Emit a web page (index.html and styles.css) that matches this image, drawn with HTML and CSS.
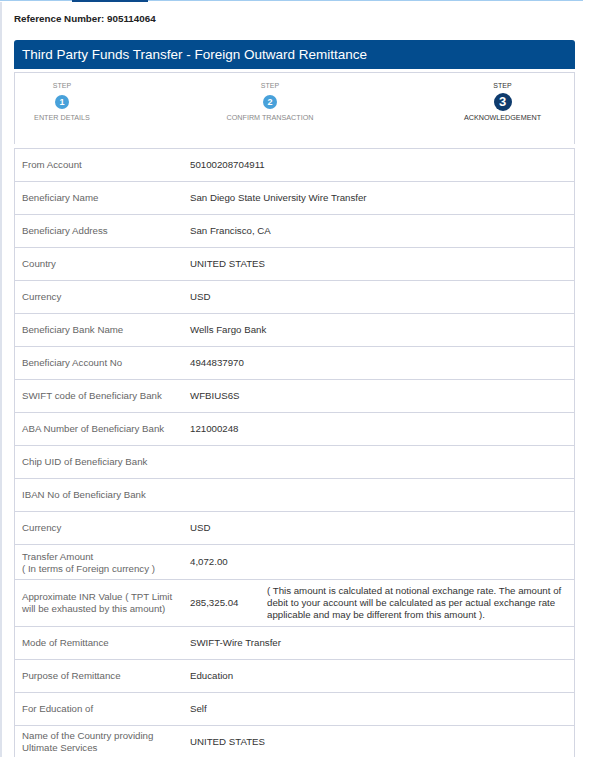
FILE: index.html
```html
<!DOCTYPE html>
<html>
<head>
<meta charset="utf-8">
<link rel="stylesheet" href="styles.css">
</head>
<body>
<div class="page">
  <div class="topbar"><span class="tb-a"></span><span class="tb-b"></span><span class="tb-c"></span></div>
  <div class="main">
    <div class="ref">Reference Number: 905114064</div>
    <div class="title">Third Party Funds Transfer - Foreign Outward Remittance</div>
    <div class="steps">
      <div class="step">
        <div class="step-word">STEP</div>
        <div class="step-circle-wrap"><span class="circle">1</span></div>
        <div class="step-label">ENTER DETAILS</div>
      </div>
      <div class="step">
        <div class="step-word">STEP</div>
        <div class="step-circle-wrap"><span class="circle">2</span></div>
        <div class="step-label">CONFIRM TRANSACTION</div>
      </div>
      <div class="step active">
        <div class="step-word">STEP</div>
        <div class="step-circle-wrap"><span class="circle">3</span></div>
        <div class="step-label">ACKNOWLEDGEMENT</div>
      </div>
    </div>
    <div class="table">
      <div class="row"><div class="lbl">From Account</div><div class="val wide">50100208704911</div></div>
      <div class="row"><div class="lbl">Beneficiary Name</div><div class="val wide">San Diego State University Wire Transfer</div></div>
      <div class="row"><div class="lbl">Beneficiary Address</div><div class="val wide">San Francisco, CA</div></div>
      <div class="row"><div class="lbl">Country</div><div class="val wide">UNITED STATES</div></div>
      <div class="row"><div class="lbl">Currency</div><div class="val wide">USD</div></div>
      <div class="row"><div class="lbl">Beneficiary Bank Name</div><div class="val wide">Wells Fargo Bank</div></div>
      <div class="row"><div class="lbl">Beneficiary Account No</div><div class="val wide">4944837970</div></div>
      <div class="row"><div class="lbl">SWIFT code of Beneficiary Bank</div><div class="val wide">WFBIUS6S</div></div>
      <div class="row"><div class="lbl">ABA Number of Beneficiary Bank</div><div class="val wide">121000248</div></div>
      <div class="row"><div class="lbl">Chip UID of Beneficiary Bank</div><div class="val wide"></div></div>
      <div class="row"><div class="lbl">IBAN No of Beneficiary Bank</div><div class="val wide"></div></div>
      <div class="row"><div class="lbl">Currency</div><div class="val wide">USD</div></div>
      <div class="row mid"><div class="lbl">Transfer Amount<br>( In terms of Foreign currency )</div><div class="val wide">4,072.00</div></div>
      <div class="row tall"><div class="lbl">Approximate INR Value ( TPT Limit will be exhausted by this amount)</div><div class="val">285,325.04</div><div class="val note">( This amount is calculated at notional exchange rate. The amount of debit to your account will be calculated as per actual exchange rate applicable and may be different from this amount ).</div></div>
      <div class="row"><div class="lbl">Mode of Remittance</div><div class="val wide">SWIFT-Wire Transfer</div></div>
      <div class="row"><div class="lbl">Purpose of Remittance</div><div class="val wide">Education</div></div>
      <div class="row"><div class="lbl">For Education of</div><div class="val wide">Self</div></div>
      <div class="row"><div class="lbl">Name of the Country providing Ultimate Services</div><div class="val wide">UNITED STATES</div></div>
    </div>
  </div>
</div>
</body>
</html>
```

FILE: styles.css
```css
html, body {
  margin: 0;
  padding: 0;
  background: #ffffff;
}
body {
  font-family: "Liberation Sans", Arial, sans-serif;
  color: #333;
}
.page {
  width: 583px;
  height: 757px;
  overflow: hidden;
}
.topbar {
  display: flex;
  height: 2px;
  align-items: flex-start;
}
.tb-a { width: 72px; height: 1px; background: #a3cdf0; }
.tb-b { width: 76px; height: 2px; background: #0c4a8b; }
.tb-c { flex: 1; height: 1px; background: #a3cdf0; }
.main {
  border-left: 2px solid #dde2ec;
  padding: 11px 8px 0 12px;
  min-height: 757px;
}
.ref {
  font-size: 9.8px;
  font-weight: bold;
  line-height: 12px;
  color: #222;
}
.title {
  margin-top: 15px;
  height: 29px;
  line-height: 29px;
  background: #034c8e;
  color: #fff;
  font-size: 13.5px;
  padding-left: 8px;
  border-radius: 3px 3px 0 0;
}
.steps {
  margin-top: 3px;
  height: 63px;
  border: 1px solid #d3d6e2;
  border-bottom: none;
  display: grid;
  grid-template-columns: 94px 322px 1fr;
  padding-top: 8px;
  box-sizing: content-box;
}
.step {
  display: flex;
  flex-direction: column;
  align-items: center;
  color: #8a8a8a;
}
.step-word {
  font-size: 7px;
  line-height: 10px;
}
.step-circle-wrap {
  height: 18px;
  margin-top: 2px;
  display: flex;
  align-items: center;
  justify-content: center;
}
.circle {
  width: 14px;
  height: 14px;
  border-radius: 50%;
  background: #48a1da;
  color: #fff;
  font-size: 9px;
  font-weight: bold;
  line-height: 14px;
  text-align: center;
}
.step-label {
  margin-top: 2px;
  font-size: 7.2px;
  line-height: 10px;
  white-space: nowrap;
}
.step.active { color: #333; }
.step.active .circle {
  width: 18px;
  height: 18px;
  line-height: 18px;
  font-size: 13px;
  background: #0e3b6d;
}
.table {
  margin-top: 4px;
  border: 1px solid #d3d6e2;
  border-bottom: none;
}
.row {
  display: grid;
  grid-template-columns: 168px 77px 1fr;
  align-items: center;
  min-height: 32px;
  border-bottom: 1px solid #d3d6e2;
  font-size: 9.7px;
  line-height: 12px;
}
.lbl {
  padding: 4px 7px;
  color: #666;
}
.val {
  padding: 4px 7px;
  color: #333;
}
.val.wide { grid-column: span 2; }
.row.mid .lbl { padding-top: 6px; padding-bottom: 4px; }
.row.tall .lbl,
.row.tall .val { padding-top: 5px; padding-bottom: 5px; }
```
